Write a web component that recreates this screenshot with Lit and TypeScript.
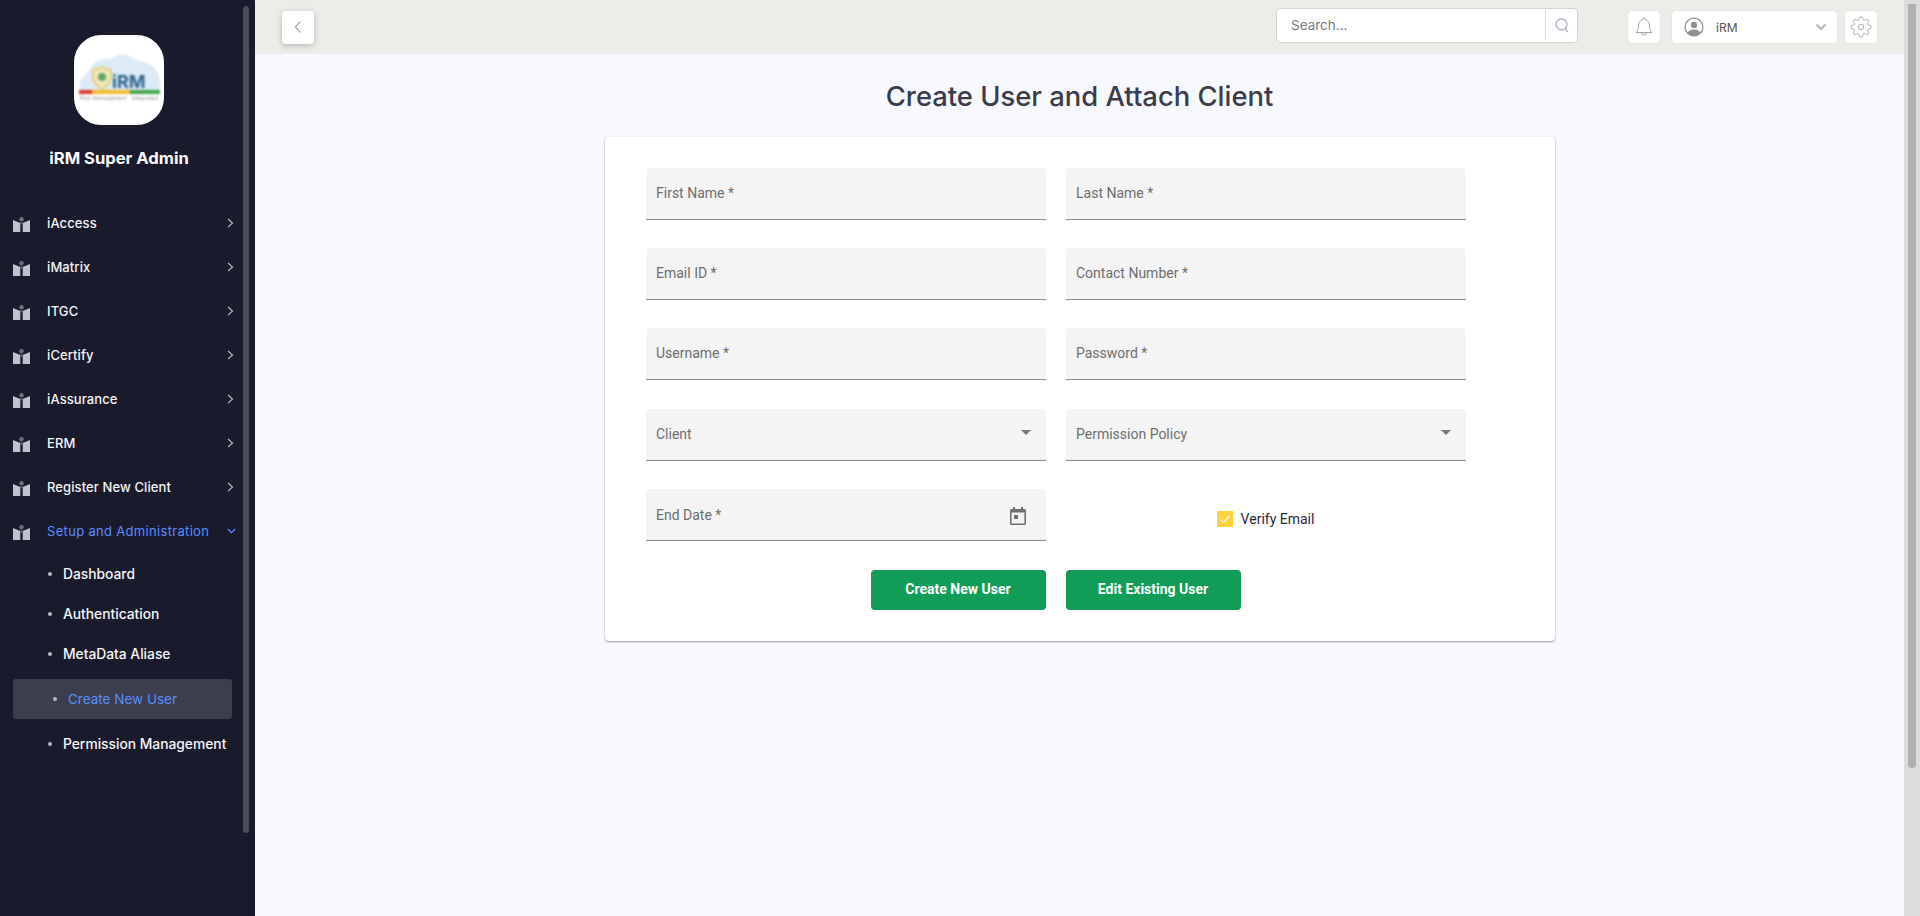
import { LitElement, html, css, svg } from "lit";
import { customElement } from "lit/decorators.js";

const navItems = ["iAccess", "iMatrix", "ITGC", "iCertify", "iAssurance", "ERM", "Register New Client"];
const subItems = ["Dashboard", "Authentication", "MetaData Aliase"];

const moduleIcon = svg`<svg class="mod" width="17" height="15" viewBox="0 0 17 15"><circle cx="8.500" cy="2.200" r="2.200" fill="#6e6f7c"/><path d="M0 3 L7.300 6 V15 H0Z M17 3 L9.700 6 V15 H17Z" fill="#c2c2cc"/><path d="M7 5.500 L8.500 8 L10 5.500Z" fill="#6e6f7c"/></svg>`;
const chevR = svg`<svg width="7" height="10" viewBox="0 0 7 10"><path d="M1 1 L5.500 5 L1 9" fill="none" stroke="#b4b5bd" stroke-width="1.200"/></svg>`;
const chevD = svg`<svg width="9" height="6" viewBox="0 0 9 6"><path d="M.8 1 L4.500 4.600 L8.200 1" fill="none" stroke="#5b8cff" stroke-width="1.200"/></svg>`;

@customElement("app-root")
export class AppRoot extends LitElement {
  static styles = css`
    :host { display: block; height: 916px; overflow: hidden; font-family: Inter, "Liberation Sans", sans-serif; }
    .page { display: flex; height: 916px; }
    .side { position: relative; width: 255px; flex: none; background: #191b2d; color: #fff; display: flex; flex-direction: column; }
    .side-thumb { position: absolute; left: 243px; top: 6px; width: 6px; height: 827px; border-radius: 3px; background: #4a4c59; }
    .logo { width: 90px; height: 90px; border-radius: 27px; background: #fff; margin: 35px 0 0 74px; overflow: hidden; }
    .brand { margin-top: 22px; width: 238px; text-align: center; font-size: 16.600px; font-weight: 700; line-height: 22px; }
    .nav { margin-top: 32px; display: flex; flex-direction: column; }
    .item { height: 44px; display: flex; align-items: center; padding-left: 13px; font-size: 13px; font-weight: 500; color: #f4f4f6; letter-spacing: .1px; }
    .item .mod { flex: none; margin: 2px 17px 0 0; }
    .item .label { flex: 1; }
    .item .chev { width: 7px; margin-right: 21px; display: flex; align-items: center; }
    .item.open { color: #5b8cff; }
    .item.open .label { letter-spacing: .32px; font-weight: 400; }
    .item.open .chev { margin-right: 19px; width: 9px; }
    .sub { display: flex; flex-direction: column; padding-top: 1px; }
    .subitem { height: 40px; display: flex; align-items: center; padding-left: 48px; font-size: 13.800px; font-weight: 500; color: #f6f6f8; }
    .dot { width: 4px; height: 4px; border-radius: 50%; background: #b9bac2; margin-right: 11px; flex: none; }
    .subitem.active { height: 40px; margin: 5px 23px 5px 13px; padding-left: 40px; background: #3c3e4d; border-radius: 3px; color: #5b8cff; font-weight: 400; font-size: 13.500px; }
    .subitem.active .dot { margin-right: 11px; }

    .main { flex: 1; min-width: 0; background: #f8f9fe; display: flex; flex-direction: column; }
    .top { height: 54px; flex: none; background: #eeece8; display: flex; align-items: center; padding: 0 27px; }
    .back { width: 32px; height: 33px; background: #fff; border-radius: 4px; box-shadow: 0 2px 6px rgba(0,0,0,.22); display: flex; align-items: center; justify-content: center; }
    .search { margin: -4px 0 0 auto; width: 302px; height: 35px; box-sizing: border-box; background: #fff; border: 1px solid #d2d2d0; border-radius: 5px; display: flex; align-items: center; padding-left: 14px; font-size: 13.500px; color: #7a7a85; }
    .search span { flex: 1; }
    .search .mag { width: 31px; height: 30px; border-left: 1px solid #dcdcdc; display: flex; align-items: center; justify-content: center; }
    .box { height: 32px; background: #fff; border-radius: 4px; box-sizing: border-box; box-shadow: 0 0 1px rgba(0,0,0,.2); display: flex; align-items: center; justify-content: center; }
    .bell { width: 32px; margin-left: 50px; }
    .user { width: 165px; margin-left: 12px; justify-content: flex-start; padding-left: 12px; font-size: 12px; color: #555; }
    .user .name { flex: 1; margin-left: 12px; }
    .user svg:last-child { margin-right: 10px; }
    .gear { width: 32px; margin-left: 8px; }

    .content { flex: 1; display: flex; flex-direction: column; align-items: center; }
    h1 { margin: 24px 0 0; font-size: 27.400px; line-height: 36px; font-weight: 500; color: #3b3b4a; }
    .card { margin-top: 23px; width: 950px; height: 504px; box-sizing: border-box; background: #fff; border-radius: 4px; box-shadow: 0 1px 2px rgba(0,0,0,.4), 0 0 3px rgba(0,0,0,.05); padding: 31px 0 0 41px; }
    .grid { display: grid; grid-template-columns: 400px 400px; column-gap: 20px; row-gap: 28.200px; }
    .field { height: 52px; box-sizing: border-box; background: #f4f4f4; border-bottom: 1px solid #8a8a8a; border-radius: 4px 4px 0 0; display: flex; align-items: center; padding: 0 10px 0 10.500px; font: 400 14px/1 Roboto, sans-serif; color: #6d6d6d; }
    .field span { flex: 1; margin-top: -2px; }
    .field.low span { margin-top: 0; }
    .field.date span { margin-top: 2px; }
    .arrow { width: 0; height: 0; border-left: 5px solid transparent; border-right: 5px solid transparent; border-top: 5px solid #757575; margin-right: 5px; margin-top: -3px; }
    .cal { margin: 3px 10px 0 0; }
    .check { display: flex; align-items: center; justify-content: center; font: 400 14px/1 Roboto, sans-serif; color: #2a2a3a; padding-top: 8px; }
    .cb { width: 16px; height: 16px; background: #fdd23e; margin-right: 8px; display: flex; }
    .btns { margin-top: 29px; margin-left: 225px; display: flex; gap: 20px; }
    .btn { width: 175px; height: 40px; background: #119d58; border-radius: 4px; color: #fff; font: 700 14px/39px Roboto, sans-serif; text-align: center; }

    .track { width: 16px; flex: none; background: #dcdcdc; padding: 4px 4px 0; box-sizing: border-box; }
    .thumb { width: 8px; height: 764px; border-radius: 0 0 4px 4px; background: #b0b0b0; }
  `;

  private field(label: string, tail: unknown = "", cls = "") {
    return html`<div class="field ${cls}"><span>${label}</span>${tail}</div>`;
  }

  render() {
    const arrow = html`<div class="arrow"></div>`;
    const cal = svg`<svg class="cal" width="16" height="18" viewBox="0 0 16 18"><path d="M3 0h2v2h6V0h2v2h1.500A1.500 1.500 0 0 1 16 3.500v13a1.500 1.500 0 0 1-1.500 1.500h-13A1.500 1.500 0 0 1 0 16.500v-13A1.500 1.500 0 0 1 1.500 2H3Z" fill="#6f6f6f"/><rect x="1.600" y="5.500" width="12.800" height="11" fill="#f4f4f4"/><rect x="4" y="8" width="4" height="4" fill="#6f6f6f"/></svg>`;
    return html`<div class="page">
      <aside class="side">
        <div class="logo">
          <svg width="90" height="90" viewBox="0 0 90 90" style="filter: blur(.9px)">
            <path d="M6 56 Q4 42 14 38 Q20 22 36 24 Q50 14 64 26 Q84 28 86 46 L86 56Z" fill="#dcebf6"/>
            <path d="M19 35 L28 32 L37 35 V44 Q35 50 28 54 Q21 50 19 44Z" fill="#f1e7b8" stroke="#e5c668" stroke-width="1.500"/>
            <circle cx="28" cy="42" r="4" fill="#5ea566"/>
            <text x="38" y="53" font-family="Inter, sans-serif" font-weight="700" font-size="18" fill="#2f638c">iRM</text>
            <rect x="5" y="55" width="13" height="4" fill="#e0352b"/>
            <rect x="18" y="55" width="38" height="4" fill="#f3bb2b"/>
            <rect x="56" y="55" width="30" height="4" fill="#3fa54a"/>
            <text x="6" y="65" font-family="Inter, sans-serif" font-size="5" textLength="78" fill="#8a8a8a">Risk Management · Integrated</text>
          </svg>
        </div>
        <div class="brand">iRM Super Admin</div>
        <nav class="nav">
          ${navItems.map((n) => html`<div class="item">${moduleIcon}<span class="label">${n}</span><span class="chev">${chevR}</span></div>`)}
          <div class="item open">${moduleIcon}<span class="label">Setup and Administration</span><span class="chev">${chevD}</span></div>
          <div class="sub">
            ${subItems.map((n) => html`<div class="subitem"><i class="dot"></i>${n}</div>`)}
            <div class="subitem active"><i class="dot"></i>Create New User</div>
            <div class="subitem"><i class="dot"></i>Permission Management</div>
          </div>
        </nav>
        <div class="side-thumb"></div>
      </aside>
      <main class="main">
        <header class="top">
          <div class="back"><svg width="10" height="14" viewBox="0 0 10 14"><path d="M7.500 1.500 L2.500 7 L7.500 12.500" fill="none" stroke="#8d8d95" stroke-width="1.100"/></svg></div>
          <div class="search"><span>Search...</span><div class="mag"><svg width="16" height="17" viewBox="0 0 16 17"><circle cx="7.500" cy="7.500" r="5.500" fill="none" stroke="#a9a9ba" stroke-width="1.300"/><path d="M11.500 12 L14 15" stroke="#a9a9ba" stroke-width="1.200"/></svg></div></div>
          <div class="box bell"><svg width="20" height="22" viewBox="0 0 20 22"><path d="M10 2 a1.300 1.300 0 0 1 1.300 1.500 C14.500 4.500 15.500 7 15.500 10 C15.500 13.500 16.500 15 18 16.500 H2 C3.500 15 4.500 13.500 4.500 10 C4.500 7 5.500 4.500 8.700 3.500 A1.300 1.300 0 0 1 10 2Z M7.500 16.500 a2.500 2.500 0 0 0 5 0" fill="none" stroke="#a8a8a8" stroke-width="1"/></svg></div>
          <div class="box user">
            <svg width="20" height="20" viewBox="0 0 20 20"><defs><clipPath id="uc"><circle cx="10" cy="10" r="8.700"/></clipPath></defs><circle cx="10" cy="10" r="8.700" fill="#fff"/><g clip-path="url(#uc)"><circle cx="10" cy="8" r="3.200" fill="#8f8f8f"/><ellipse cx="10" cy="17.500" rx="7" ry="5" fill="#8f8f8f"/></g><circle cx="10" cy="10" r="8.900" fill="none" stroke="#8f8f8f" stroke-width="1.200"/></svg>
            <span class="name">iRM</span>
            <svg width="12" height="8" viewBox="0 0 12 8"><path d="M1.500 1.500 L6 6 L10.500 1.500" fill="none" stroke="#b3b3c2" stroke-width="2"/></svg>
          </div>
          <div class="box gear"><svg width="22" height="22" viewBox="0 0 24 24" fill="none" stroke="#a8a8a8" stroke-width="1"><circle cx="12" cy="12" r="3"/><path d="M19.400 15a1.650 1.650 0 0 0 .33 1.820l.06.060a2 2 0 1 1-2.830 2.830l-.06-.060a1.650 1.650 0 0 0-2.820 1.170V21a2 2 0 1 1-4 0v-.09A1.650 1.650 0 0 0 7.260 19.740l-.06.060a2 2 0 1 1-2.830-2.830l.060-.060a1.650 1.650 0 0 0-1.170-2.820H3a2 2 0 1 1 0-4h.09A1.650 1.650 0 0 0 4.260 7.260l-.06-.060a2 2 0 1 1 2.830-2.830l.06.060a1.650 1.650 0 0 0 1.820.33H9a1.650 1.650 0 0 0 1-1.510V3a2 2 0 1 1 4 0v.09a1.650 1.650 0 0 0 2.820 1.170l.06-.060a2 2 0 1 1 2.830 2.830l-.06.060a1.650 1.650 0 0 0-.33 1.820V9a1.650 1.650 0 0 0 1.510 1H21a2 2 0 1 1 0 4h-.09a1.650 1.650 0 0 0-1.510 1Z"/></svg></div>
        </header>
        <div class="content">
          <h1>Create User and Attach Client</h1>
          <section class="card">
            <div class="grid">
              ${this.field("First Name *")}${this.field("Last Name *")}
              ${this.field("Email ID *")}${this.field("Contact Number *")}
              ${this.field("Username *")}${this.field("Password *")}
              ${this.field("Client", arrow, "low")}${this.field("Permission Policy", arrow, "low")}
              ${this.field("End Date *", cal, "date")}
              <div class="check"><div class="cb"><svg width="16" height="16" viewBox="0 0 16 16"><path d="M3.500 8.500 L6.500 11.300 L12.500 5" fill="none" stroke="#fff" stroke-width="1.100"/></svg></div>Verify Email</div>
            </div>
            <div class="btns"><div class="btn">Create New User</div><div class="btn">Edit Existing User</div></div>
          </section>
        </div>
      </main>
      <div class="track"><div class="thumb"></div></div>
    </div>`;
  }
}
